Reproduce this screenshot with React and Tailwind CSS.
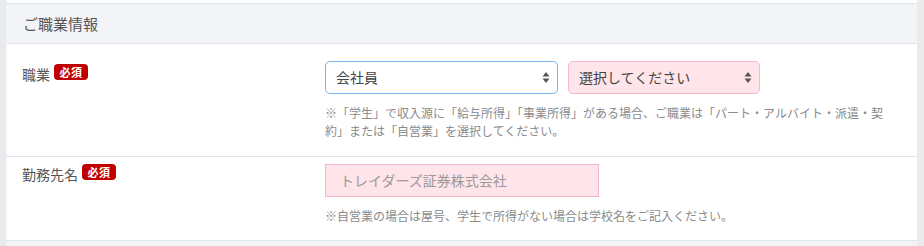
import React from "react";

const font = { fontFamily: '"Noto Sans CJK JP", "Liberation Sans", sans-serif' };

const Badge = () => (
  <span className="ml-[4px] inline-flex h-[16px] w-[34px] items-center justify-center rounded-[4px] bg-[#c00000] text-[11px] font-bold leading-none tracking-[0.5px] text-white">
    必須
  </span>
);

const Arrows = () => (
  <svg width="8" height="13" viewBox="0 0 8 13" className="shrink-0">
    <path d="M4 1 L7.5 5.5 L0.5 5.5 Z" fill="#555" />
    <path d="M4 12 L7.5 7.5 L0.5 7.5 Z" fill="#555" />
  </svg>
);

const SelectBox = ({ value, className }) => (
  <div
    className={`flex h-[33px] items-center justify-between rounded-[5px] border pl-[10px] pr-[7px] text-[14px] text-[#444] ${className}`}
  >
    <span>{value}</span>
    <Arrows />
  </div>
);

export default function App() {
  return (
    <div className="flex h-[246px] w-[924px] bg-[#f2f4f7]" style={font}>
      <div className="w-[7px] shrink-0 border-r border-[#f3f5f7] bg-[#e8eaed]" />
      <div className="flex flex-1 flex-col">
        <div className="h-[3px] bg-white" />
        <div className="border-t border-dotted border-[#cfd8e2]" />
        <div className="flex h-[40px] items-center border-b border-[#dde3ea] bg-[#f2f4f7] pl-[16px] pt-[2px] text-[15px] text-[#555]">
          ご職業情報
        </div>

        <div className="flex bg-white pt-[17px] pb-[16px]">
          <div className="flex w-[318px] items-start pl-[15px] pt-[3px]">
            <span className="text-[14px] leading-[20px] text-[#555]">職業</span>
            <Badge />
          </div>
          <div className="flex-1 pr-[20px]">
            <div className="flex gap-[10px]">
              <SelectBox value="会社員" className="w-[233px] border-[#7ab4ea] bg-white" />
              <SelectBox
                value="選択してください"
                className="w-[192px] border-[#f6b5c8] bg-[#ffe4ea]"
              />
            </div>
            <p className="mt-[10px] text-[12px] leading-[18px] text-[#8a8a8a]">
              ※「学生」で収入源に「給与所得」「事業所得」がある場合、ご職業は「パート・アルバイト・派遣・契約」または「自営業」を選択してください。
            </p>
          </div>
        </div>

        <div className="border-t border-dotted border-[#cfd8e2]" />

        <div className="flex bg-white pt-[7px] pb-[15px]">
          <div className="flex w-[318px] items-start pl-[15px] pt-0">
            <span className="text-[14px] leading-[20px] text-[#555]">勤務先名</span>
            <Badge />
          </div>
          <div className="flex-1 pr-[20px]">
            <div className="flex h-[33px] w-[274px] items-center border border-[#f6b5c8] bg-[#ffe4ea] pl-[14px] text-[14px] text-[#9a9a9a]">
              トレイダーズ証券株式会社
            </div>
            <p className="mt-[10px] text-[12px] leading-[18px] text-[#8a8a8a]">
              ※自営業の場合は屋号、学生で所得がない場合は学校名をご記入ください。
            </p>
          </div>
        </div>

        <div className="border-t border-dotted border-[#cfd8e2]" />
      </div>
      <div className="w-[7px] shrink-0 bg-[#ebebeb]" />
    </div>
  );
}
